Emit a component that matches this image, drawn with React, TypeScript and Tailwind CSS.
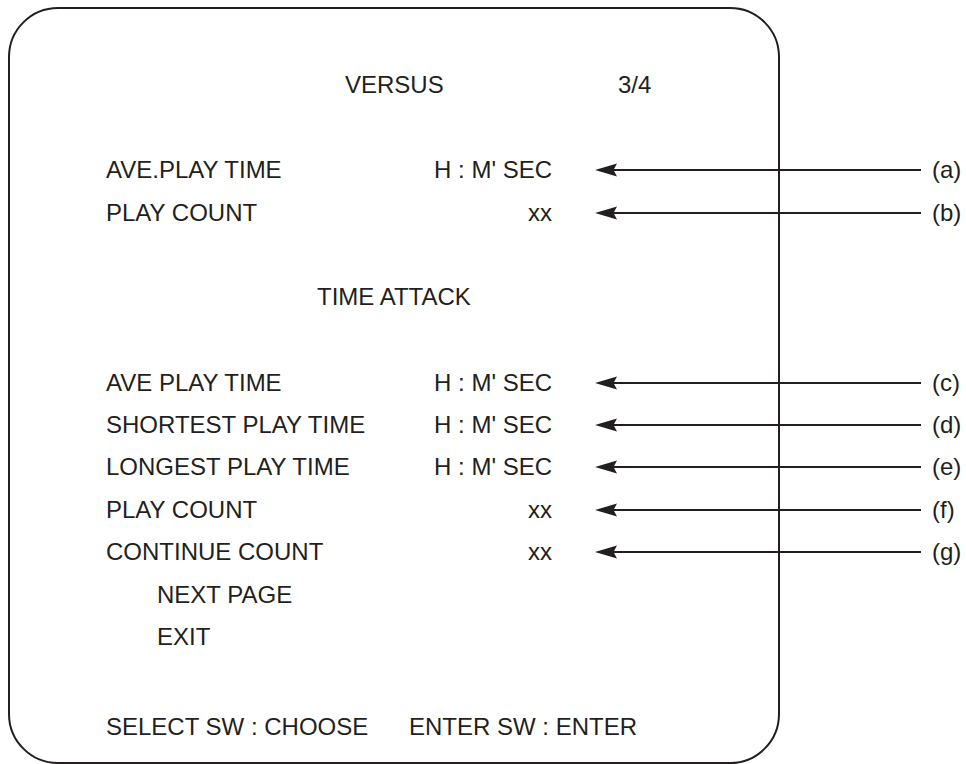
import React from 'react';

type Row = { label: string; value: string; tag: string };

const versusRows: Row[] = [
  { label: 'AVE.PLAY TIME', value: "H : M' SEC", tag: '(a)' },
  { label: 'PLAY COUNT', value: 'xx', tag: '(b)' },
];

const attackRows: Row[] = [
  { label: 'AVE PLAY TIME', value: "H : M' SEC", tag: '(c)' },
  { label: 'SHORTEST PLAY TIME', value: "H : M' SEC", tag: '(d)' },
  { label: 'LONGEST PLAY TIME', value: "H : M' SEC", tag: '(e)' },
  { label: 'PLAY COUNT', value: 'xx', tag: '(f)' },
  { label: 'CONTINUE COUNT', value: 'xx', tag: '(g)' },
];

const Arrow = () => (
  <svg width="326" height="14" viewBox="0 0 326 14" className="shrink-0 block">
    <line x1="18" y1="7" x2="326" y2="7" stroke="#231f20" strokeWidth="2.2" />
    <polygon points="0,7 22,0.5 18.5,7 22,13.5" fill="#231f20" />
  </svg>
);

const MenuRow = ({ row, h }: { row: Row; h: string }) => (
  <div className={`flex items-center ${h}`}>
    <div className="flex w-[446px] shrink-0 justify-between">
      <span>{row.label}</span>
      <span>{row.value}</span>
    </div>
    <div className="ml-[43px] shrink-0">
      <Arrow />
    </div>
    <span className="ml-[11px] shrink-0">{row.tag}</span>
  </div>
);

export default function App() {
  return (
    <div
      className="w-[966px] h-[764px] overflow-hidden bg-white pl-[8px] pt-[7px] text-[24px] text-[#231f20]"
      style={{ fontFamily: '"Liberation Sans", Arial, sans-serif' }}
    >
      <div className="w-[772px] h-[757px] rounded-[50px] border-[2.5px] border-[#231f20] pl-[96px] pt-[54.5px] leading-none">
        <div className="flex items-center h-[43px]">
          <span className="ml-[239px] w-[273px] shrink-0">VERSUS</span>
          <span>3/4</span>
        </div>

        <div className="mt-[41.5px]">
          {versusRows.map((r) => (
            <MenuRow key={r.tag} row={r} h="h-[43px]" />
          ))}
        </div>

        <div className="mt-[41.5px] flex items-center h-[43px]">
          <span className="ml-[211px]">TIME ATTACK</span>
        </div>

        <div className="mt-[43px]">
          {attackRows.map((r) => (
            <MenuRow key={r.tag} row={r} h="h-[42.4px]" />
          ))}
          <div className="flex items-center h-[42.4px] pl-[51px]">NEXT PAGE</div>
          <div className="flex items-center h-[42.4px] pl-[51px]">EXIT</div>
        </div>

        <div className="mt-[47px] flex items-center h-[43px]">
          <span className="w-[303px] shrink-0">SELECT SW : CHOOSE</span>
          <span>ENTER SW : ENTER</span>
        </div>
      </div>
    </div>
  );
}
